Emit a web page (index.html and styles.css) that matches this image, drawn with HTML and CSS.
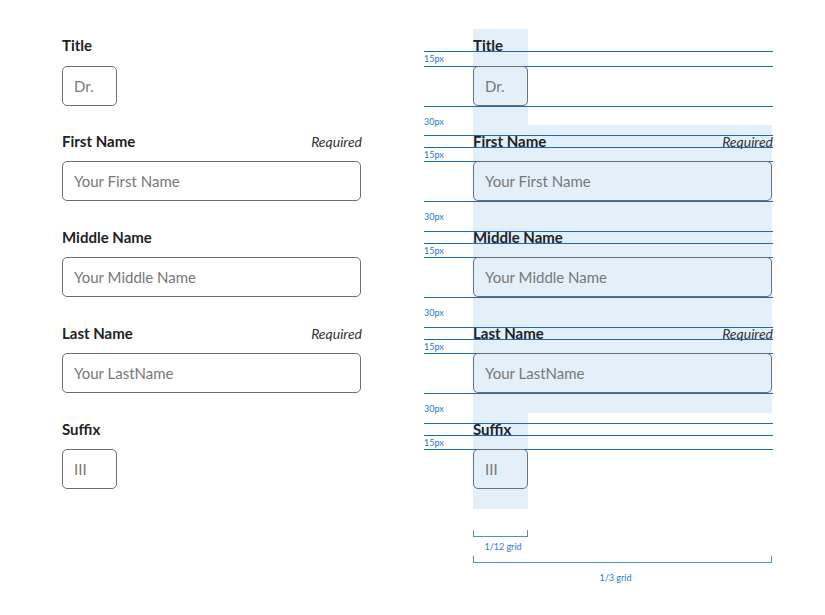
FILE: index.html
```html
<!DOCTYPE html>
<html lang="en">
<head>
<meta charset="utf-8">
<title>Name fields spec</title>
<link rel="stylesheet" href="styles.css">
</head>
<body>
<div class="page">
  <form class="form">
    <div class="field">
      <div class="label-row"><label class="label" for="t1">Title</label></div>
      <input class="input short" id="t1" placeholder="Dr.">
    </div>
    <div class="field">
      <div class="label-row"><label class="label" for="f1">First Name</label><span class="req">Required</span></div>
      <input class="input" id="f1" placeholder="Your First Name">
    </div>
    <div class="field">
      <div class="label-row"><label class="label" for="m1">Middle Name</label></div>
      <input class="input" id="m1" placeholder="Your Middle Name">
    </div>
    <div class="field">
      <div class="label-row"><label class="label" for="l1">Last Name</label><span class="req">Required</span></div>
      <input class="input" id="l1" placeholder="Your LastName">
    </div>
    <div class="field">
      <div class="label-row"><label class="label" for="s1">Suffix</label></div>
      <input class="input short" id="s1" placeholder="III">
    </div>
  </form>

  <div class="spec">
    <div class="band narrow">
      <div class="pad-top"></div>
      <div class="label-row"><span class="label">Title</span></div>
      <div class="rule rule-15 rule-15-first"><span class="note note-15">15px</span></div>
      <input class="input short" placeholder="Dr." tabindex="-1">
      <div class="rule rule-30 rule-30-first"><span class="note note-30">30px</span></div>
    </div>
    <div class="band wide">
      <div class="rule rule-top"></div>
      <div class="label-row"><span class="label">First Name</span><span class="req">Required</span></div>
      <div class="rule rule-15"><span class="note note-15">15px</span></div>
      <input class="input" placeholder="Your First Name" tabindex="-1">
      <div class="rule rule-30"><span class="note note-30">30px</span></div>
    </div>
    <div class="band wide">
      <div class="rule rule-top"></div>
      <div class="label-row"><span class="label">Middle Name</span></div>
      <div class="rule rule-15"><span class="note note-15">15px</span></div>
      <input class="input" placeholder="Your Middle Name" tabindex="-1">
      <div class="rule rule-30"><span class="note note-30">30px</span></div>
    </div>
    <div class="band wide">
      <div class="rule rule-top"></div>
      <div class="label-row"><span class="label">Last Name</span><span class="req">Required</span></div>
      <div class="rule rule-15"><span class="note note-15">15px</span></div>
      <input class="input" placeholder="Your LastName" tabindex="-1">
      <div class="rule rule-30"><span class="note note-30">30px</span></div>
    </div>
    <div class="band narrow band-last">
      <div class="rule rule-top"></div>
      <div class="label-row"><span class="label">Suffix</span></div>
      <div class="rule rule-15"><span class="note note-15">15px</span></div>
      <input class="input short" placeholder="III" tabindex="-1">
      <div class="pad-bottom"></div>
    </div>

    <div class="bracket bracket-col"></div>
    <div class="caption caption-col">1/12 grid</div>
    <div class="bracket bracket-third"></div>
    <div class="caption caption-third">1/3 grid</div>
  </div>
</div>
</body>
</html>
```

FILE: styles.css
```css
html, body {
  margin: 0;
  padding: 0;
  background: #ffffff;
}

body {
  font-family: Lato, "Open Sans", "Noto Sans", sans-serif;
  color: #222222;
}

.page {
  display: flex;
  gap: 63px;
  padding-left: 62px;
}

/* ---------- plain form ---------- */
.form {
  width: 299px;
  padding-top: 39px;
  display: flex;
  flex-direction: column;
  gap: 30px;
}

.field {
  display: flex;
  flex-direction: column;
  gap: 14px;
}

.field:first-child {
  gap: 15px;
}

.field:first-child + .field {
  margin-top: -1px;
}

.label-row {
  display: flex;
  justify-content: space-between;
  align-items: baseline;
  height: 12px;
  line-height: 12px;
  white-space: nowrap;
}

.label {
  font-size: 15px;
  font-weight: 700;
  color: #222222;
}

.req {
  font-size: 14px;
  font-style: italic;
  color: #333333;
  margin-right: -1px;
}

.input {
  display: block;
  box-sizing: border-box;
  width: 299px;
  height: 40px;
  margin: 0;
  padding: 0 11px;
  border: 1px solid #707070;
  border-radius: 5px;
  background: transparent;
  font-family: Lato, "Open Sans", "Noto Sans", sans-serif;
  font-size: 15px;
  color: #222222;
  outline: none;
}

.input::placeholder {
  color: #787878;
  opacity: 1;
}

.input.short {
  width: 55px;
}

/* ---------- spec / redline column ---------- */
.spec {
  width: 349px;
  padding-top: 29px;
}

.band {
  margin-left: 49px;
  background: #e3eff9;
}

.band.narrow {
  width: 55px;
}

.band.wide {
  width: 299px;
}

.pad-top {
  height: 10px;
}

.pad-bottom {
  height: 20px;
}

.rule {
  box-sizing: border-box;
  margin-left: -49px;
  width: 349px;
}

.rule-top {
  height: 10px;
  box-shadow: 0 1px 0 #1b68bd;
}

.rule-15 {
  height: 14px;
  border-top: 1px solid #1b68bd;
  box-shadow: 0 1px 0 #1b68bd;
}

.rule-15-first {
  height: 15px;
}

.rule-30 {
  height: 20px;
  border-top: 1px solid #1b68bd;
}

.rule-30-first {
  height: 19px;
}

.note {
  display: block;
  font-size: 9px;
  color: #2a7bcf;
  white-space: nowrap;
}

.note-15 {
  line-height: 14px;
}

.note-30 {
  line-height: 29px;
}

.bracket {
  box-sizing: border-box;
  margin-left: 49px;
  height: 7px;
  border: 1.5px solid #4a8fd0;
  border-top: none;
}

.bracket-col {
  width: 55px;
  margin-top: 21px;
}

.bracket-third {
  width: 299px;
  margin-top: 3px;
}

.caption {
  box-sizing: border-box;
  margin-left: 49px;
  font-size: 9px;
  line-height: 12px;
  color: #2a7bcf;
  text-align: center;
  white-space: nowrap;
}

.caption-col {
  width: 55px;
  margin-top: 4px;
  padding-left: 5px;
}

.caption-third {
  width: 299px;
  margin-top: 9px;
  padding-right: 14px;
}
```
